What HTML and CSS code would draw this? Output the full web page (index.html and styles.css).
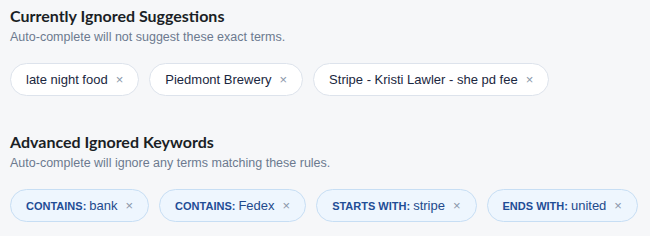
FILE: index.html
```html
<!DOCTYPE html>
<html lang="en">
<head>
    <meta charset="UTF-8">
    <title>Ignored Suggestions</title>
    <link rel="stylesheet" href="styles.css">
</head>
<body>
    <section class="section">
        <h2>Currently Ignored Suggestions</h2>
        <p class="hint">Auto-complete will not suggest these exact terms.</p>
        <div class="chips">
            <span class="chip">late night food <span class="x">×</span></span>
            <span class="chip">Piedmont Brewery <span class="x">×</span></span>
            <span class="chip">Stripe - Kristi Lawler - she pd fee <span class="x">×</span></span>
        </div>
    </section>
    <section class="section">
        <h2>Advanced Ignored Keywords</h2>
        <p class="hint">Auto-complete will ignore any terms matching these rules.</p>
        <div class="chips">
            <span class="chip rule"><b>CONTAINS:</b> bank <span class="x">×</span></span>
            <span class="chip rule"><b>CONTAINS:</b> Fedex <span class="x">×</span></span>
            <span class="chip rule"><b>STARTS WITH:</b> stripe <span class="x">×</span></span>
            <span class="chip rule"><b>ENDS WITH:</b> united <span class="x">×</span></span>
        </div>
    </section>
</body>
</html>
```

FILE: styles.css
```css
body {
    margin: 0;
    padding: 6px 10px 0;
    background: #f6f7f9;
    font-family: 'Liberation Sans', Arial, sans-serif;
    color: #1a2740;
}
.section {
    margin-bottom: 36px;
}
.section:last-child {
    margin-bottom: 0;
}
h2 {
    font-family: 'Lato', 'Open Sans', sans-serif;
    font-size: 16px;
    font-weight: 700;
    color: #1b1f26;
    margin: 0;
    line-height: 20px;
}
.hint {
    margin: 3px 0 0;
    font-size: 12.5px;
    color: #6c7a8f;
    line-height: 16px;
}
.chips {
    display: flex;
    gap: 10px;
    margin-top: 18px;
}
.chip {
    display: inline-flex;
    align-items: center;
    white-space: nowrap;
    height: 31px;
    padding: 0 15px;
    background: #fff;
    border: 1px solid #dde3ec;
    border-radius: 17px;
    font-size: 13px;
    color: #1a2740;
}
.x {
    margin-left: 8px;
    color: #8a97aa;
    font-size: 13px;
}
.chip.rule {
    background: #eef6fe;
    border-color: #c7def4;
    color: #234a8c;
}
.chip.rule b {
    font-size: 11px;
    margin-right: 3px;
    color: #1f4d96;
}
```
